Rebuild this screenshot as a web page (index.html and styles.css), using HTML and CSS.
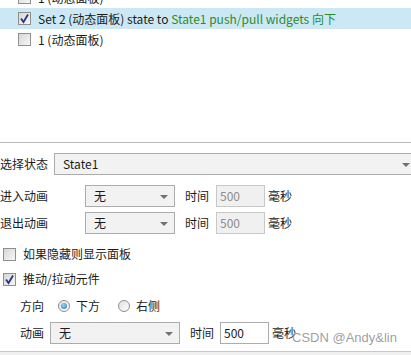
FILE: index.html
```html
<!DOCTYPE html>
<html>
	<head>
		<meta charset="utf-8" />
		<title>面板状态</title>
		<link rel="stylesheet" href="styles.css">
	</head>
	<body>
		<div class="states">
			<div class="list">
				<div class="row"><span class="chk"></span><span>1 (动态面板)</span></div>
				<div class="row sel">
					<span class="chk on"><svg viewBox="0 0 13 13"><path d="M3 6.5 L5.5 10 L10 2.5" fill="none" stroke="#2b3585" stroke-width="1.8"/></svg></span>
					<span>Set 2 (动态面板) state to <span class="green">State1 push/pull widgets 向下</span></span>
				</div>
				<div class="row"><span class="chk"></span><span>1 (动态面板)</span></div>
			</div>
		</div>

		<div class="props">
			<div class="line first">
				<span class="lbl">选择状态</span>
				<div class="select wide"><span>State1</span><i class="arrow"></i></div>
			</div>
			<div class="line">
				<span class="lbl w85">进入动画</span>
				<div class="select mid"><span>无</span><i class="arrow"></i></div>
				<span class="time">时间</span>
				<div class="input off">500</div>
				<span class="ms">毫秒</span>
			</div>
			<div class="line">
				<span class="lbl w85">退出动画</span>
				<div class="select mid"><span>无</span><i class="arrow"></i></div>
				<span class="time">时间</span>
				<div class="input off">500</div>
				<span class="ms">毫秒</span>
			</div>

			<div class="opt o1"><span class="chk"></span><span>如果隐藏则显示面板</span></div>
			<div class="opt o2">
				<span class="chk on"><svg viewBox="0 0 13 13"><path d="M3 6.5 L5.5 10 L10 2.5" fill="none" stroke="#2b3585" stroke-width="1.8"/></svg></span>
				<span>推动/拉动元件</span>
			</div>

			<div class="sub dir">
				<span class="sublbl">方向</span>
				<span class="radio on"></span><span class="rtxt">下方</span>
				<span class="radio"></span><span class="rtxt">右侧</span>
			</div>
			<div class="sub anim">
				<span class="sublbl">动画</span>
				<div class="select big"><span>无</span><i class="arrow"></i></div>
				<span class="time">时间</span>
				<div class="input">500</div>
				<span class="ms">毫秒</span>
			</div>
			<div class="mark">CSDN @Andy&amp;lin</div>
		</div>
		<div class="foot"></div>
	</body>
</html>
```

FILE: styles.css
```css
html, body{
	margin: 0;
	padding: 0;
	background: #fff;
	overflow: hidden;
}
body{
	width: 411px;
	height: 355px;
	font: 12px/16px "Noto Sans CJK SC", "Liberation Sans", sans-serif;
	color: #1b1b1b;
	position: relative;
	white-space: nowrap;
}
.states{
	height: 142px;
	overflow: hidden;
	border-bottom: 1px solid #b8b8b8;
}
.list{
	margin-top: -13px;
}
.row{
	height: 21px;
	display: flex;
	align-items: center;
	padding-left: 18px;
	gap: 7px;
}
.row.sel{
	background: #cce8f5;
}
.green{
	color: #2a8c2a;
}
/* 复选框 */
.chk{
	width: 11px;
	height: 11px;
	border: 1px solid #8e8f8f;
	background: linear-gradient(135deg, #d6d6d6, #f7f7f7);
	display: inline-block;
	flex: none;
	position: relative;
}
.chk svg{
	position: absolute;
	left: -1px;
	top: -1px;
	width: 13px;
	height: 13px;
}
.props{
	padding-top: 10px;
	position: relative;
}
.line{
	display: flex;
	align-items: center;
	height: 22px;
	margin-bottom: 5px;
}
.line.first{
	margin-bottom: 10px;
}
.lbl{
	width: 54px;
	flex: none;
}
.lbl.w85{
	width: 85px;
}
.select{
	border: 1px solid #acacac;
	background: #f2f2f2;
	display: flex;
	align-items: center;
	padding-left: 8px;
	box-sizing: border-box;
	height: 22px;
	position: relative;
	flex: none;
}
.select.wide{
	width: 362px;
}
.select.mid{
	width: 90px;
}
.select.big{
	width: 130px;
	margin-left: 6px;
}
.arrow{
	position: absolute;
	right: 6px;
	top: 9px;
	border-left: 4px solid transparent;
	border-right: 4px solid transparent;
	border-top: 4px solid #707070;
}
.select.wide .arrow{
	right: 5px;
}
.time{
	margin-left: 10px;
	width: 31px;
	flex: none;
}
.input{
	width: 49px;
	height: 22px;
	box-sizing: border-box;
	border: 1px solid #acacac;
	padding-left: 3px;
	display: flex;
	align-items: center;
	flex: none;
	background: #fff;
}
.input.off{
	background: #f0f0f0;
	border-color: #c8c8c8;
	color: #8c8c8c;
}
.ms{
	margin-left: 3px;
}
.opt{
	display: flex;
	align-items: center;
	gap: 7px;
	padding-left: 3px;
	height: 18px;
}
.opt.o1{
	margin-top: 11px;
}
.opt.o2{
	margin-top: 7px;
}
.sub{
	display: flex;
	align-items: center;
	padding-left: 20px;
}
.sub.dir{
	height: 18px;
	margin-top: 9px;
}
.sub.anim{
	height: 22px;
	margin-top: 7px;
}
.sublbl{
	width: 30px;
	flex: none;
}
.sub.anim .sublbl{
	width: 24px;
}
.sub.anim .time{
	width: 30px;
}
.radio{
	width: 10px;
	height: 10px;
	border: 1px solid #8e8f8f;
	border-radius: 50%;
	background: linear-gradient(135deg, #e2e2e2, #fdfdfd);
	margin-left: 8px;
	position: relative;
	flex: none;
}
.radio.on:after{
	content: "";
	position: absolute;
	left: 2px;
	top: 2px;
	width: 6px;
	height: 6px;
	border-radius: 50%;
	background: radial-gradient(circle at 40% 35%, #9ad6f5, #1c78b8);
}
.rtxt{
	margin-left: 6px;
	margin-right: 10px;
}
.mark{
	position: absolute;
	left: 292px;
	top: 187px;
	font: 13px/16px "Liberation Sans", sans-serif;
	color: rgba(140,140,140,0.85);
}
.foot{
	position: absolute;
	left: 0;
	right: 0;
	top: 351px;
	bottom: 0;
	border-top: 1px solid #c8c8c8;
	background: #f0f0f0;
}
```
